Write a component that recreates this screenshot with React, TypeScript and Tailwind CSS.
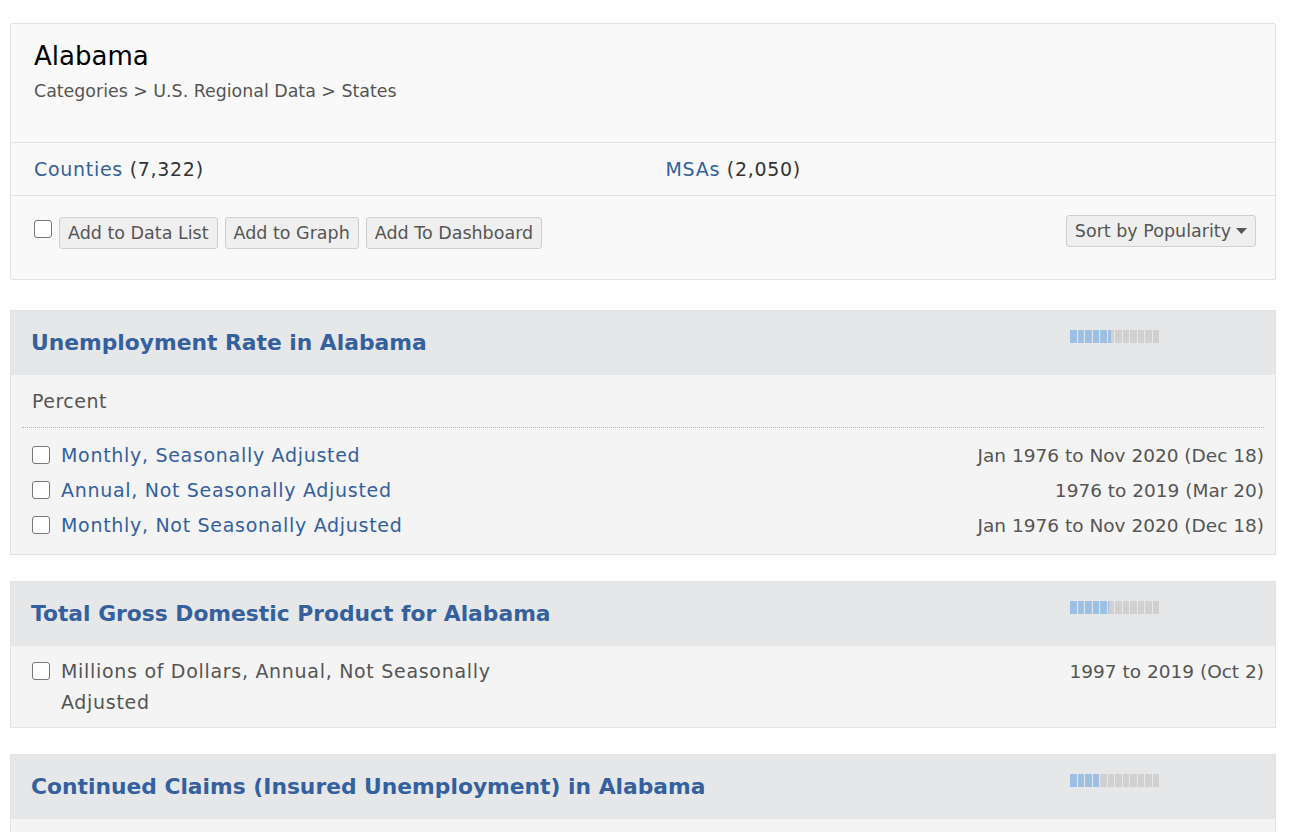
import React from 'react';

const font = { fontFamily: '"DejaVu Sans", "Liberation Sans", sans-serif' };

type Row = { label: string; range: string; link?: boolean };

interface SeriesCardProps {
  title: string;
  pop: number;
  units?: string;
  rows: Row[];
}

const PopBar: React.FC<{ value: number }> = ({ value }) => {
  // 12 cells, partially filled
  return (
    <div className="flex gap-[1px]">
      {Array.from({ length: 12 }).map((_, i) => {
        const fill = Math.max(0, Math.min(1, value - i));
        return (
          <div key={i} className="relative w-[6.5px] h-[13px] bg-[#d0d0d0]">
            <div className="absolute inset-y-0 left-0 bg-[#9dbfe3]" style={{ width: `${fill * 100}%` }} />
          </div>
        );
      })}
    </div>
  );
};

const Check: React.FC<{ className?: string }> = ({ className = '' }) => (
  <span className={`inline-block w-[18px] h-[18px] shrink-0 rounded-[3px] border border-[#767676] bg-white ${className}`} />
);

const SeriesCard: React.FC<SeriesCardProps> = ({ title, pop, units, rows }) => (
  <div className="border border-[#e3e3e3]">
    <div className="h-[64px] bg-[#e6e7e9] flex items-center pl-[20px] pr-[116px] relative">
      <a className="text-[21.8px] font-bold text-[#34609e]">{title}</a>
      <div className="absolute left-[1059px] top-[19px]">
        <PopBar value={pop} />
      </div>
    </div>
    <div className="bg-[#f4f4f4] px-[11px] pb-[9px]">
      {units && (
        <div className="text-[19px] tracking-[0.5px] leading-[27px] text-[#555] pl-[10px] pt-[13px] pb-[12px] border-b border-dotted border-[#b5b5b5]">{units}</div>
      )}
      <div className={units ? 'pt-[12px]' : 'pt-[10px]'}>
        {rows.map((r) => (
          <div key={r.label} className="flex justify-between pl-[10px] min-h-[35px]">
            <div className="flex gap-[11px] max-w-[480px]">
              <Check className="mt-[6px]" />
              <span className={`text-[19px] tracking-[0.7px] leading-[31px] ${r.link === false ? 'text-[#555]' : 'text-[#34609e]'}`}>{r.label}</span>
            </div>
            <span className="text-[18.5px] text-[#555] leading-[31px] whitespace-nowrap">{r.range}</span>
          </div>
        ))}
      </div>
    </div>
  </div>
);

const Btn: React.FC<{ children: React.ReactNode }> = ({ children }) => (
  <button className="h-[32px] px-[8px] bg-[#efefef] border border-[#cfcfcf] rounded-[3px] text-[17.5px] text-[#555]">{children}</button>
);

export default function App() {
  return (
    <div className="min-h-screen bg-white px-[10px] pt-[23px] pb-[20px]" style={font}>
      <div className="w-[1266px]">
        <div className="bg-[#f9f9f9] border border-[#e3e3e3] rounded-[2px]">
          <div className="pl-[23px] pt-[15px] h-[118px]">
            <h1 className="text-[26px] text-black leading-[34px]">Alabama</h1>
            <div className="text-[17.4px] text-[#555] mt-[5px]">Categories &gt; U.S. Regional Data &gt; States</div>
          </div>
          <div className="border-t border-[#e3e3e3] h-[53px] grid grid-cols-2 items-center pl-[23px] text-[19px] tracking-[0.7px]">
            <div>
              <a className="text-[#34609e]">Counties</a> <span className="text-[#333]">(7,322)</span>
            </div>
            <div className="pl-[11px]">
              <a className="text-[#34609e]">MSAs</a> <span className="text-[#333]">(2,050)</span>
            </div>
          </div>
          <div className="border-t border-[#e3e3e3] h-[84px] flex items-start justify-between pl-[23px] pr-[19px] pt-[21px]">
            <div className="flex items-start gap-[7px]">
              <Check className="mt-[3px]" />
              <div className="flex gap-[7px]">
                <Btn>Add to Data List</Btn>
                <Btn>Add to Graph</Btn>
                <Btn>Add To Dashboard</Btn>
              </div>
            </div>
            <button className="-mt-[2px] h-[32px] px-[8px] bg-[#efefef] border border-[#cfcfcf] rounded-[3px] text-[17.5px] text-[#555] flex items-center gap-[5px]">
              Sort by Popularity
              <svg width="11" height="6" viewBox="0 0 11 6"><path d="M0 0h11L5.5 6z" fill="#555" /></svg>
            </button>
          </div>
        </div>

        <div className="pt-[30px] flex flex-col gap-[26px]">
          <SeriesCard
            title="Unemployment Rate in Alabama"
            pop={5.5}
            units="Percent"
            rows={[
              { label: 'Monthly, Seasonally Adjusted', range: 'Jan 1976 to Nov 2020 (Dec 18)' },
              { label: 'Annual, Not Seasonally Adjusted', range: '1976 to 2019 (Mar 20)' },
              { label: 'Monthly, Not Seasonally Adjusted', range: 'Jan 1976 to Nov 2020 (Dec 18)' },
            ]}
          />
          <SeriesCard
            title="Total Gross Domestic Product for Alabama"
            pop={5.2}
            rows={[
              { label: 'Millions of Dollars, Annual, Not Seasonally Adjusted', range: '1997 to 2019 (Oct 2)', link: false },
            ]}
          />
          <SeriesCard
            title="Continued Claims (Insured Unemployment) in Alabama"
            pop={4}
            units="Number"
            rows={[
              { label: 'Weekly, Ending Saturday, Seasonally Adjusted', range: '1987-01-10 to 2020-12-05 (Dec 17)' },
            ]}
          />
        </div>
      </div>
    </div>
  );
}
